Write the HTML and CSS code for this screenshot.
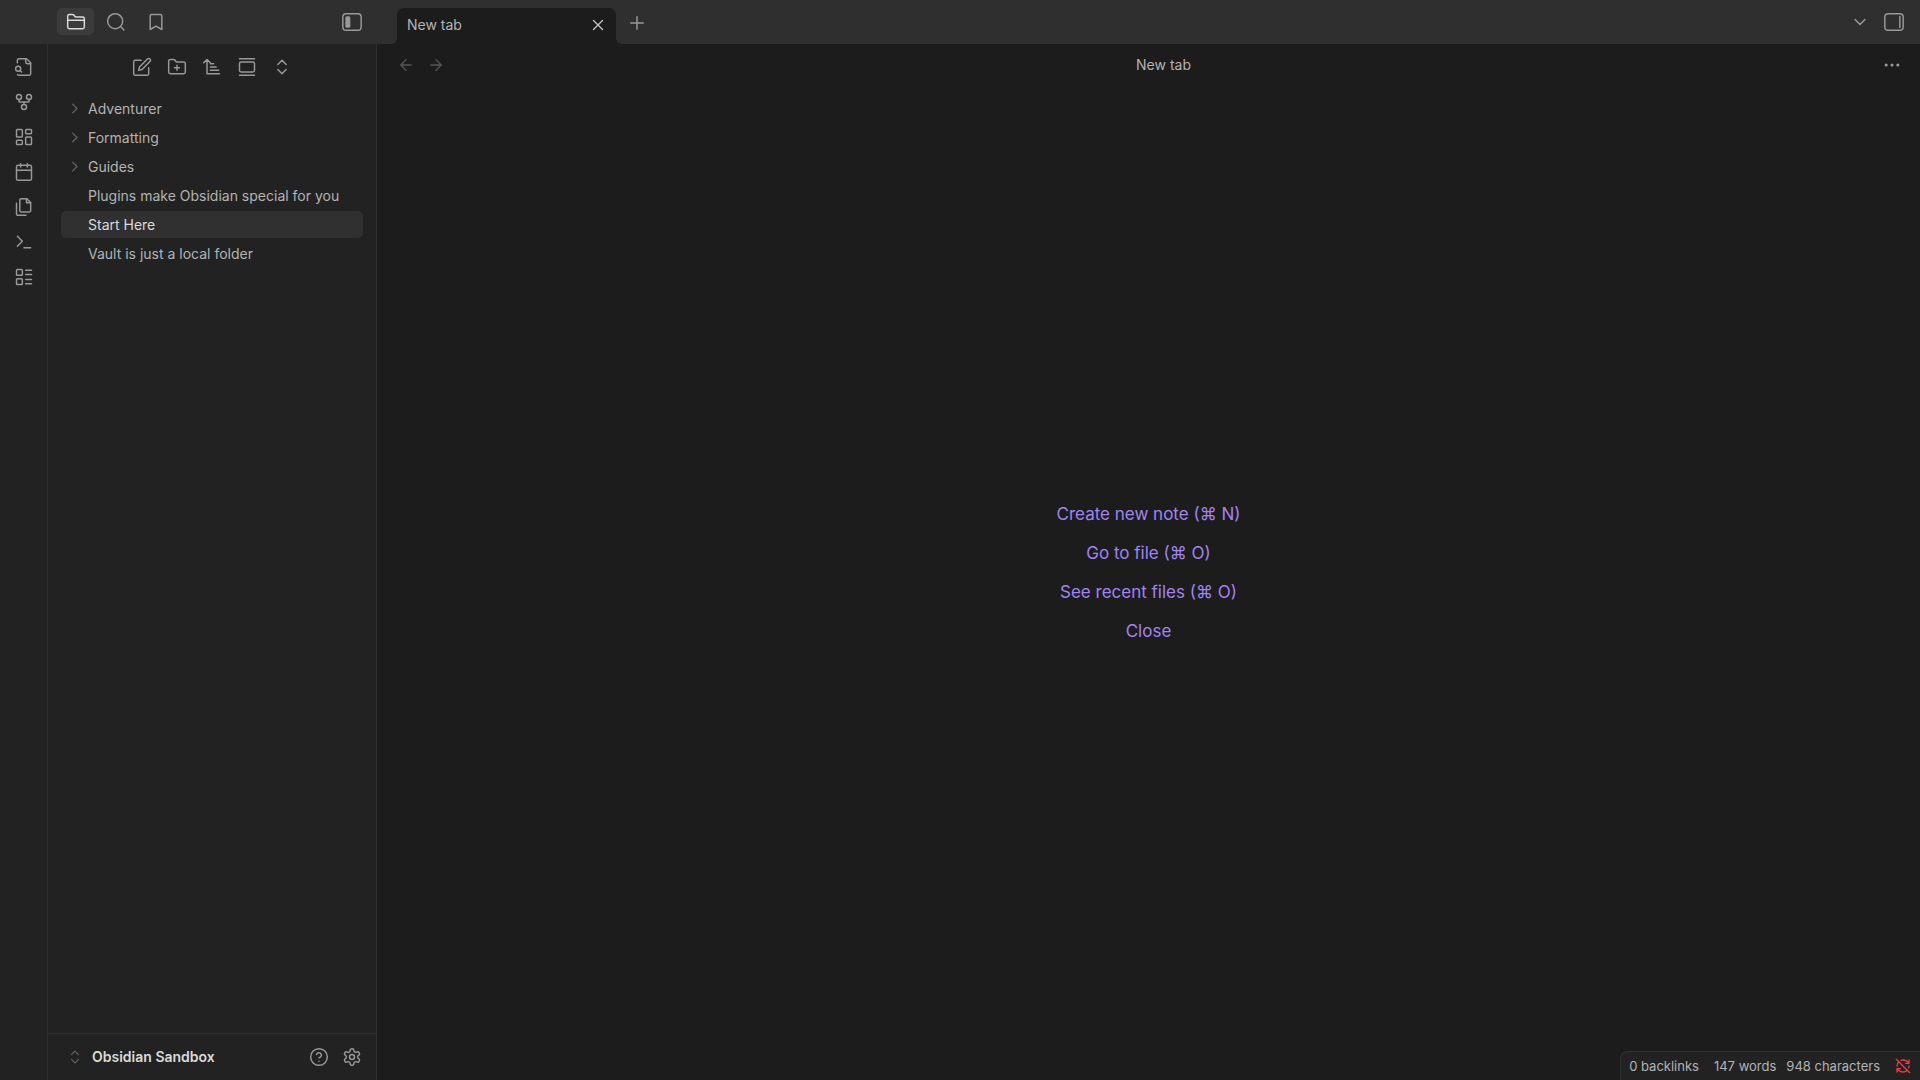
FILE: index.html
```html
<!DOCTYPE html>
<html lang="en">
<head>
<meta charset="utf-8">
<title>New tab - Obsidian Sandbox</title>
<link rel="stylesheet" href="styles.css">
</head>
<body>
<div class="app">
  <header class="titlebar">
    <div class="titlebar-side">
      <div class="side-tabs">
        <button class="side-tab active" aria-label="Files"><svg class="icon" viewBox="0 0 24 24"><path d="M20 20a2 2 0 0 0 2-2V8a2 2 0 0 0-2-2h-7.900a2 2 0 0 1-1.690-.9L9.600 3.900A2 2 0 0 0 7.930 3H4a2 2 0 0 0-2 2v13a2 2 0 0 0 2 2Z"/><path d="M2 10h20"/></svg></button>
        <button class="side-tab" aria-label="Search"><svg class="icon" viewBox="0 0 24 24"><circle cx="11" cy="11" r="9"/><path d="m21.500 21.500-4-4"/></svg></button>
        <button class="side-tab" aria-label="Bookmarks"><svg class="icon" viewBox="0 0 24 24"><path d="m19 21-7-4-7 4V5a2 2 0 0 1 2-2h10a2 2 0 0 1 2 2v16z"/></svg></button>
      </div>
      <button class="icon-button" aria-label="Collapse left sidebar"><svg class="icon panel" viewBox="0 0 24 24"><rect x="1" y="2" width="22" height="20" rx="4"/><rect class="solid" x="4" y="5" width="6" height="14" rx="2"/></svg></button>
    </div>
    <div class="tab-strip">
      <div class="tab">
        <span class="tab-title">New tab</span>
        <button class="icon-button tab-close" aria-label="Close tab"><svg class="icon" viewBox="0 0 24 24"><path d="M18 6 6 18M6 6l12 12"/></svg></button>
      </div>
      <button class="icon-button new-tab" aria-label="Open new tab"><svg class="icon" viewBox="0 0 24 24"><path d="M4.500 12h15M12 4.500v15"/></svg></button>
      <div class="strip-end">
        <button class="icon-button" aria-label="Tab list"><svg class="icon" viewBox="0 0 24 24"><path d="m6 9 6 6 6-6"/></svg></button>
        <button class="icon-button" aria-label="Expand right sidebar"><svg class="icon panel" viewBox="0 0 24 24"><rect x="1" y="2" width="22" height="20" rx="4"/><path d="M19 5.500v13"/></svg></button>
      </div>
    </div>
  </header>

  <div class="workspace">
    <nav class="ribbon" aria-label="Ribbon">
      <button class="icon-button" aria-label="Open quick switcher"><svg class="icon" viewBox="0 0 24 24"><path d="M14 2v4a2 2 0 0 0 2 2h4"/><path d="M4.270 21a2 2 0 0 0 1.730 1h12a2 2 0 0 0 2-2V7l-5-5H6a2 2 0 0 0-2 2v3"/><circle cx="5" cy="14" r="3"/><path d="m9 18-1.500-1.500"/></svg></button>
      <button class="icon-button" aria-label="Open graph view"><svg class="icon" viewBox="0 0 24 24"><circle cx="12" cy="18" r="3"/><circle cx="6" cy="6" r="3"/><circle cx="18" cy="6" r="3"/><path d="M18 9v2c0 .6-.4 1-1 1H7c-.6 0-1-.4-1-1V9M12 12v3"/></svg></button>
      <button class="icon-button" aria-label="Create new canvas"><svg class="icon" viewBox="0 0 24 24"><rect x="3" y="3" width="7" height="9" rx="1"/><rect x="14" y="3" width="7" height="5" rx="1"/><rect x="14" y="12" width="7" height="9" rx="1"/><rect x="3" y="16" width="7" height="5" rx="1"/></svg></button>
      <button class="icon-button" aria-label="Open daily note"><svg class="icon" viewBox="0 0 24 24"><rect x="3" y="4" width="18" height="18" rx="2"/><path d="M16 2v4M8 2v4M3 10h18"/></svg></button>
      <button class="icon-button" aria-label="Insert template"><svg class="icon" viewBox="0 0 24 24"><path d="M15.500 2H8.600c-.4 0-.8.200-1.100.5-.3.300-.5.700-.5 1.100v12.800c0 .4.200.8.500 1.100.3.300.7.500 1.100.5h9.800c.4 0 .8-.2 1.100-.5.3-.3.500-.7.500-1.100V6.500L15.500 2z"/><path d="M3 7.600v12.800c0 .4.200.8.500 1.100.3.300.7.500 1.100.5h9.800M15 2v5h5"/></svg></button>
      <button class="icon-button" aria-label="Open command palette"><svg class="icon" viewBox="0 0 24 24"><path d="m4 17 6-6-6-6M12 19h8"/></svg></button>
      <button class="icon-button" aria-label="Open layouts"><svg class="icon" viewBox="0 0 24 24"><rect x="3" y="3" width="7" height="7" rx="1"/><rect x="3" y="14" width="7" height="7" rx="1"/><path d="M14 4h7M14 9h7M14 15h7M14 20h7"/></svg></button>
    </nav>

    <aside class="sidebar">
      <div class="file-actions">
        <button class="icon-button" aria-label="New note"><svg class="icon" viewBox="0 0 24 24"><path d="M11 4H4a2 2 0 0 0-2 2v14a2 2 0 0 0 2 2h14a2 2 0 0 0 2-2v-7"/><path d="M18.500 2.500a2.120 2.120 0 0 1 3 3L12 15l-4 1 1-4Z"/></svg></button>
        <button class="icon-button" aria-label="New folder"><svg class="icon" viewBox="0 0 24 24"><path d="M12 10v6M9 13h6"/><path d="M20 20a2 2 0 0 0 2-2V8a2 2 0 0 0-2-2h-7.900a2 2 0 0 1-1.690-.9L9.600 3.900A2 2 0 0 0 7.930 3H4a2 2 0 0 0-2 2v13a2 2 0 0 0 2 2Z"/></svg></button>
        <button class="icon-button" aria-label="Change sort order"><svg class="icon" viewBox="0 0 24 24"><path d="m2 7 4-4 4 4M6 3v17h15M10 8h4M10 12h7M10 16h10"/></svg></button>
        <button class="icon-button" aria-label="Auto-reveal current file"><svg class="icon" viewBox="0 0 24 24"><path d="M3 2h18M3 22h18"/><rect x="3" y="6" width="18" height="12" rx="2"/></svg></button>
        <button class="icon-button" aria-label="Expand all"><svg class="icon" viewBox="0 0 24 24"><path d="m7 15 5 5 5-5M7 9l5-5 5 5"/></svg></button>
      </div>
      <div class="tree">
        <button class="tree-item"><svg class="icon chevron" viewBox="0 0 24 24"><path d="m9 5 7 7-7 7"/></svg>Adventurer</button>
        <button class="tree-item"><svg class="icon chevron" viewBox="0 0 24 24"><path d="m9 5 7 7-7 7"/></svg>Formatting</button>
        <button class="tree-item"><svg class="icon chevron" viewBox="0 0 24 24"><path d="m9 5 7 7-7 7"/></svg>Guides</button>
        <button class="tree-item file">Plugins make Obsidian special for you</button>
        <button class="tree-item file selected">Start Here</button>
        <button class="tree-item file">Vault is just a local folder</button>
      </div>
      <footer class="vault">
        <button class="vault-switch"><svg class="icon small" viewBox="0 0 24 24"><path d="m6 16 6 6 6-6M6 8l6-6 6 6"/></svg>Obsidian Sandbox</button>
        <button class="icon-button" aria-label="Help"><svg class="icon" viewBox="0 0 24 24"><circle cx="12" cy="12" r="10"/><path d="M9.090 9a3 3 0 0 1 5.830 1c0 2-3 3-3 3M12 17h.01"/></svg></button>
        <button class="icon-button" aria-label="Settings"><svg class="icon" viewBox="0 0 24 24"><path d="M12.220 2h-.44a2 2 0 0 0-2 2v.18a2 2 0 0 1-1 1.730l-.43.250a2 2 0 0 1-2 0l-.15-.08a2 2 0 0 0-2.730.730l-.22.380a2 2 0 0 0 .730 2.730l.15.100a2 2 0 0 1 1 1.720v.510a2 2 0 0 1-1 1.740l-.15.090a2 2 0 0 0-.73 2.730l.220.380a2 2 0 0 0 2.730.730l.15-.08a2 2 0 0 1 2 0l.430.250a2 2 0 0 1 1 1.730V20a2 2 0 0 0 2 2h.440a2 2 0 0 0 2-2v-.18a2 2 0 0 1 1-1.730l.430-.25a2 2 0 0 1 2 0l.150.080a2 2 0 0 0 2.730-.73l.220-.39a2 2 0 0 0-.73-2.730l-.15-.08a2 2 0 0 1-1-1.740v-.5a2 2 0 0 1 1-1.740l.150-.09a2 2 0 0 0 .730-2.730l-.22-.38a2 2 0 0 0-2.730-.73l-.15.080a2 2 0 0 1-2 0l-.43-.25a2 2 0 0 1-1-1.730V4a2 2 0 0 0-2-2z"/><circle cx="12" cy="12" r="3"/></svg></button>
      </footer>
    </aside>

    <main class="main">
      <div class="view-header">
        <div class="history">
          <button class="icon-button" aria-label="Back"><svg class="icon faint" viewBox="0 0 24 24"><path d="m12 19-7-7 7-7M19 12H5"/></svg></button>
          <button class="icon-button" aria-label="Forward"><svg class="icon faint" viewBox="0 0 24 24"><path d="m12 5 7 7-7 7M5 12h14"/></svg></button>
        </div>
        <div class="view-title">New tab</div>
        <button class="icon-button" aria-label="More options"><svg class="icon dots" viewBox="0 0 24 24"><circle cx="5" cy="12" r="1"/><circle cx="12" cy="12" r="1"/><circle cx="19" cy="12" r="1"/></svg></button>
      </div>
      <div class="empty-state">
        <button class="action">Create new note (⌘ N)</button>
        <button class="action">Go to file (⌘ O)</button>
        <button class="action">See recent files (⌘ O)</button>
        <button class="action">Close</button>
      </div>
      <footer class="status-bar">
        <span class="backlinks">0 backlinks</span>
        <span>147 words</span>
        <span>948 characters</span>
        <svg class="icon sync" viewBox="0 0 24 24" role="img" aria-label="Sync disconnected"><path d="M21 8 18.740 5.740A9.750 9.750 0 0 0 12 3C11 3 10.030 3.160 9.130 3.470M8 16H3v5M3 12C3 9.510 4 7.260 5.640 5.640M3 16l2.260 2.260A9.750 9.750 0 0 0 12 21c2.490 0 4.740-1 6.360-2.640M21 12c0 1-.16 1.970-.47 2.870M21 3v5h-5M22 22 2 2"/></svg>
      </footer>
    </main>
  </div>
</div>
</body>
</html>
```
FILE: styles.css
```css
* { box-sizing: border-box; }

body {
  margin: 0;
  background: #1c1c1c;
  color: #b3b3b3;
  font: 14px/18px Inter, "Liberation Sans", sans-serif;
}

button {
  margin: 0;
  padding: 0;
  border: 0;
  background: none;
  color: inherit;
  font: inherit;
}

.app {
  display: flex;
  flex-direction: column;
  height: 100vh;
}

.icon {
  display: block;
  flex: none;
  width: 20px;
  height: 20px;
  fill: none;
  stroke: #999;
  stroke-width: 1.75;
  stroke-linecap: round;
  stroke-linejoin: round;
}

.solid { fill: #999; stroke: none; }
.faint { stroke: #555; }
.dots circle { fill: #b3b3b3; }

.icon-button {
  display: flex;
  align-items: center;
  justify-content: center;
  flex: none;
}

/* Title bar */
.titlebar {
  display: flex;
  flex: none;
  height: 44px;
  background: #2f2f2f;
}

.titlebar-side {
  display: flex;
  justify-content: space-between;
  flex: none;
  width: 377px;
  padding: 8px 15px 9px 57px;
}

.side-tabs { display: flex; gap: 3px; }

.side-tab {
  display: flex;
  align-items: center;
  justify-content: center;
  width: 37px;
  border-radius: 5px;
}

.side-tab.active { background: #3b3b3b; }
.side-tab.active .icon { stroke: #dadada; }

.tab-strip {
  display: flex;
  flex: 1;
  padding: 8px 16px 0 20px;
}

.tab {
  position: relative;
  display: flex;
  align-items: center;
  justify-content: space-between;
  width: 219px;
  padding: 0 9px 3px 10px;
  border-radius: 7px 7px 0 0;
  background: #1c1c1c;
}

/* Curved feet where the tab meets the page */
.tab::before,
.tab::after {
  content: "";
  position: absolute;
  bottom: 0;
  width: 6px;
  height: 6px;
}

.tab::before {
  right: 100%;
  background: radial-gradient(circle at 0 0, transparent 6px, #1c1c1c 6px);
}

.tab::after {
  left: 100%;
  background: radial-gradient(circle at 100% 0, transparent 6px, #1c1c1c 6px);
}

.tab-close .icon { width: 18px; height: 18px; stroke: #c4c4c4; }
.new-tab { width: 42px; height: 30px; }

.strip-end {
  display: flex;
  gap: 14px;
  height: 28px;
  margin-left: auto;
}

/* Ribbon */
.workspace {
  display: flex;
  flex: 1;
  min-height: 0;
}

.ribbon {
  display: flex;
  flex-direction: column;
  align-items: center;
  gap: 15px;
  flex: none;
  width: 48px;
  padding-top: 13px;
  border-right: 1px solid #2f2f2f;
  background: #222;
}

/* File explorer */
.sidebar {
  display: flex;
  flex-direction: column;
  flex: none;
  width: 329px;
  border-right: 1px solid #2f2f2f;
  background: #222;
}

.file-actions {
  display: flex;
  justify-content: center;
  gap: 15px;
  padding: 13px 0 18px;
}

.tree {
  display: flex;
  flex-direction: column;
  flex: 1;
  gap: 2px;
  padding: 0 13px;
}

.tree-item {
  display: flex;
  align-items: center;
  gap: 6px;
  height: 27px;
  padding-left: 6px;
  border-radius: 5px;
  text-align: left;
  white-space: nowrap;
}

.tree-item.file { padding-left: 27px; }
.tree-item.selected { background: #303030; color: #dadada; }

.chevron { width: 15px; height: 15px; stroke: #666; stroke-width: 2; }
.small { width: 14px; height: 14px; stroke: #666; stroke-width: 2; }

.vault {
  display: flex;
  align-items: center;
  gap: 13px;
  height: 47px;
  padding: 0 14px 0 20px;
  border-top: 1px solid #2f2f2f;
}

.vault-switch {
  display: flex;
  align-items: center;
  gap: 10px;
  margin-right: auto;
  color: #dadada;
  font-weight: 600;
}

/* Main view */
.main {
  position: relative;
  display: flex;
  flex-direction: column;
  flex: 1;
}

.view-header {
  display: flex;
  align-items: center;
  height: 41px;
  padding: 0 18px 0 20px;
}

.history { display: flex; gap: 12px; }
.history .icon { width: 18px; height: 18px; }
.view-title { flex: 1; text-align: center; }

.empty-state {
  display: flex;
  flex-direction: column;
  align-items: center;
  justify-content: center;
  flex: 1;
  gap: 15px;
  padding-bottom: 20px;
}

.action {
  color: #a184f2;
  font-size: 17px;
  line-height: 24px;
}

.status-bar {
  position: absolute;
  right: 0;
  bottom: 0;
  display: flex;
  align-items: center;
  gap: 10px;
  height: 29px;
  padding: 0 9px 0 8px;
  border: 1px solid #2f2f2f;
  border-width: 1px 0 0 1px;
  border-top-left-radius: 8px;
  background: #222;
  font-size: 13px;
}

.backlinks { margin-right: 5px; }
.sync { width: 16px; height: 16px; margin-left: 5px; stroke: #f33b45; stroke-width: 2; }
```
